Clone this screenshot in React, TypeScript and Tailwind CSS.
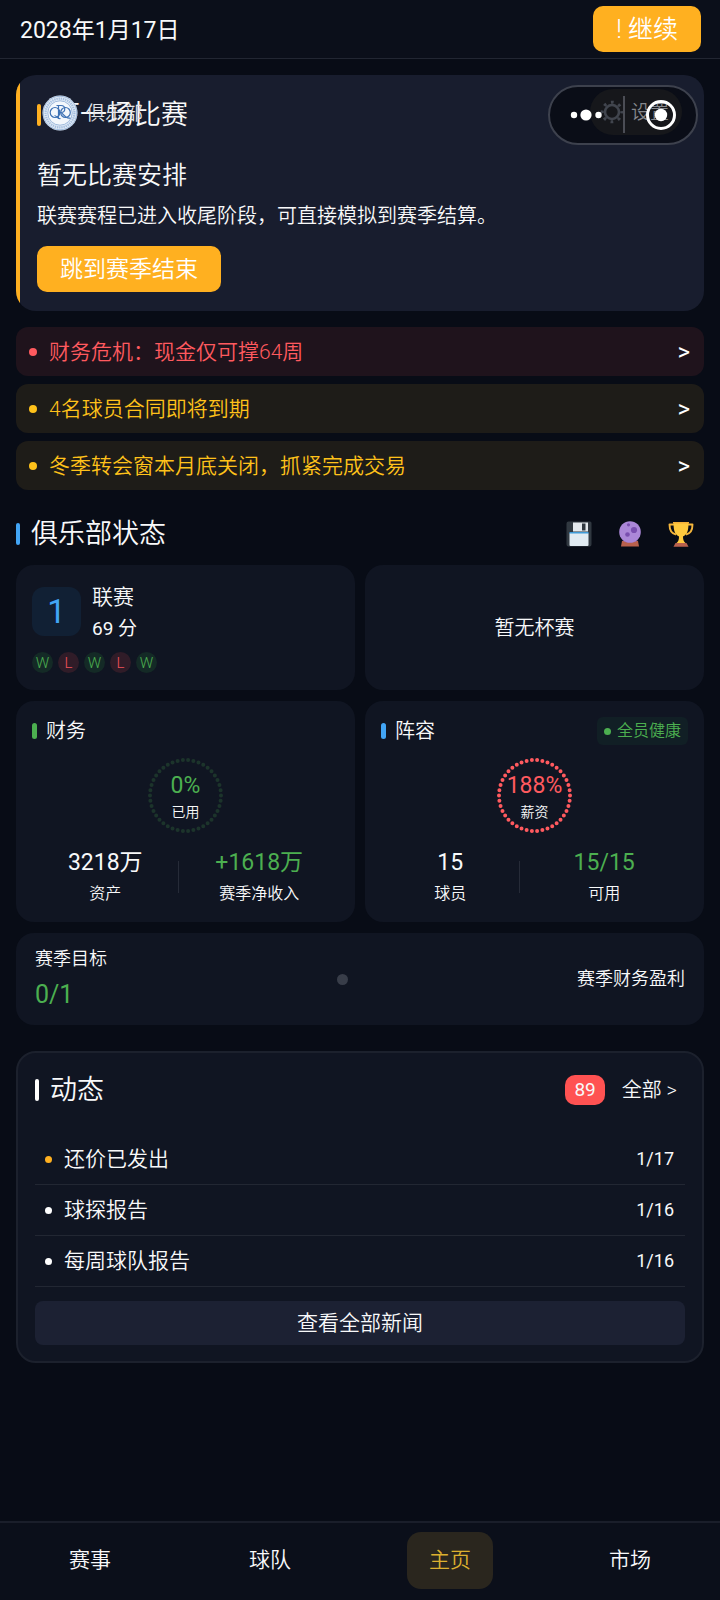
import type { ReactNode } from "react";
import clsx from "clsx";

const alerts = [
  { text: "财务危机：现金仅可撑64周", tone: "danger" },
  { text: "4名球员合同即将到期", tone: "warning" },
  { text: "冬季转会窗本月底关闭，抓紧完成交易", tone: "warning" },
];

const news = [
  { title: "还价已发出", date: "1/17", unread: true },
  { title: "球探报告", date: "1/16", unread: false },
  { title: "每周球队报告", date: "1/16", unread: false },
];

const form = ["W", "L", "W", "L", "W"];

const tabs = ["赛事", "球队", "主页", "市场"];

const cardClass = "rounded-[18px] bg-[#101522]";

function ClubCrest() {
  return (
    <svg viewBox="0 0 36 36" className="size-9" aria-hidden="true">
      <circle cx="18" cy="18" r="17.5" fill="#dfe9f5" />
      <circle cx="18" cy="18" r="16.8" fill="none" stroke="#8fadd4" strokeWidth="0.8" />
      <circle cx="18" cy="18" r="14.4" fill="none" stroke="#a3bddf" strokeWidth="2.2" strokeDasharray="1.3 0.9" />
      <circle cx="18" cy="18" r="12.2" fill="#f3f7fc" stroke="#8aabd4" strokeWidth="0.8" />
      <g fill="none" stroke="#3f72b5" strokeWidth="1.2">
        <ellipse cx="13" cy="17.500" rx="4.800" ry="5" />
        <ellipse cx="23.500" cy="17.500" rx="4.800" ry="5" />
        <path d="M14.500 10.500h4.500c5 0 5 7 0 7h-2.500M16.500 10.500v13.500M19 17.500c2.500 1 4 7 9.500 5.500M12.500 20.500c2 0 3 4 6 3" />
      </g>
    </svg>
  );
}

function GearIcon() {
  return (
    <svg viewBox="0 0 24 24" className="size-6" fill="none" stroke="#41454e" aria-hidden="true">
      <circle cx="12" cy="12" r="7" strokeWidth="2.6" />
      <circle cx="12" cy="12" r="9.800" strokeWidth="3" strokeDasharray="2.800 4.897" strokeDashoffset="1.400" />
    </svg>
  );
}

function FloppyIcon() {
  return (
    <svg viewBox="0 0 26 26" className="size-[26px]" aria-hidden="true">
      <path d="M2.5.5H24a1.500 1.500 0 0 1 1.500 1.500v21.500a2 2 0 0 1-2 2h-21a2 2 0 0 1-2-2v-21a2 2 0 0 1 2-2z" fill="#303840" />
      <path d="M7 1.500h15v9H7z" fill="#e4e9ed" />
      <path d="M16 2.500h3.500v7H16z" fill="#303840" />
      <path d="M3.500 11h19v2h-19z" fill="#3f9bd8" />
      <path d="M3.500 12.500h19V24a1 1 0 0 1-1 1h-17a1 1 0 0 1-1-1z" fill="#e1ebf2" />
    </svg>
  );
}

function CrystalBallIcon() {
  return (
    <svg viewBox="0 0 26 26" className="size-[26px]" aria-hidden="true">
      <path d="M5 20h16l1 5.500H4z" fill="#b9614d" />
      <circle cx="13" cy="11" r="10.800" fill="#ab87d8" />
      <path d="M5 18.500c4.500 4.500 11.500 4.500 16 0-2 4-13 5-16 0z" fill="#8d65bd" />
      <circle cx="17" cy="9" r="3.100" fill="#7a4fb0" />
      <circle cx="10.500" cy="13.500" r="2.300" fill="#7a4fb0" />
      <circle cx="11.500" cy="3.800" r="1.600" fill="#7a4fb0" />
    </svg>
  );
}

function TrophyIcon() {
  return (
    <svg viewBox="0 0 26 26" className="size-[26px]" aria-hidden="true">
      <path d="M6.500 3.500H1.500c0 5 1.500 9 6.500 10M19.500 3.500h5c0 5-1.500 9-6.500 10" fill="none" stroke="#f5b63c" strokeWidth="1.900" strokeLinejoin="round" />
      <path d="M5.500 1h15c0 7-.5 12-5.500 14.500 0 3 .5 5 2.500 6.500h-9c2-1.500 2.500-3.500 2.500-6.500C6 13 5.500 8 5.500 1z" fill="#ffca3e" />
      <path d="M5 1h16v1.500H5z" fill="#f3b13a" />
      <path d="M7.500 22h11l2 3.700h-15z" fill="#b9614d" />
    </svg>
  );
}

function CapsuleMenu() {
  return (
    <svg viewBox="0 0 150 60" className="h-[60px] w-[150px]" fill="#ffffff" aria-hidden="true">
      <circle cx="26" cy="30" r="3.200" />
      <circle cx="38" cy="30" r="5.600" />
      <circle cx="50.500" cy="30" r="3.200" />
      <path d="M75 11h2v37h-2z" fill="#4b4d55" />
      <circle cx="113" cy="30" r="13.500" fill="none" stroke="#ffffff" strokeWidth="3" />
      <circle cx="113" cy="30" r="6.200" />
    </svg>
  );
}

function Ring({ value, label, color, dim }: { value: string; label: string; color: string; dim?: boolean }) {
  return (
    <div className="relative mx-auto mt-3 flex size-[78px] flex-col items-center justify-center pt-1">
      <svg viewBox="0 0 78 78" className={clsx("absolute inset-0", dim && "opacity-20")} aria-hidden="true">
        <circle cx="38.500" cy="38.500" r="35.500" fill="none" stroke={color} strokeWidth="4" strokeLinecap="round" pathLength="210" strokeDasharray="0 5" />
      </svg>
      <span className="relative text-[23px] leading-7 font-normal" style={{ color }}>{value}</span>
      <span className="relative text-sm leading-6">{label}</span>
    </div>
  );
}

function Stat({ value, label, green }: { value: string; label: string; green?: boolean }) {
  return (
    <div className="flex flex-col items-center gap-1">
      <span className={clsx("text-[23px] leading-[30px] font-normal", green && "text-[#4caf50]")}>{value}</span>
      <span className="text-base leading-6">{label}</span>
    </div>
  );
}

function PanelTitle({ children, barClass }: { children: ReactNode; barClass: string }) {
  return (
    <h3 className="flex items-center gap-[9px] text-[20px] leading-7">
      <span className={clsx("h-4 w-[5px] rounded-sm", barClass)} />
      {children}
    </h3>
  );
}

export default function App() {
  return (
    <div className="flex min-h-screen flex-col bg-[#080c16] font-[Roboto,'Noto_Sans_CJK_SC',sans-serif] font-[350] text-[#f8f9fa]">
      <header className="flex h-[59px] items-center justify-between border-b border-[#222632] bg-[#0b0f1a] pr-[19px] pl-5">
        <time className="pt-1 text-[23px] leading-8 font-normal">2028年1月17日</time>
        <button type="button" className="h-[46px] rounded-[10px] bg-[#ffb020] px-[23px] pt-0.5 text-[25px] leading-8 text-white">! 继续</button>
      </header>

      <main className="flex flex-col px-4 pt-4">
        <section className="relative flex overflow-hidden rounded-[20px] bg-[#181d2e]">
          <div className="w-1 bg-[#ffb020]" />
          <div className="flex flex-col items-start pt-5 pb-[19px] pl-[17px]">
            <h2 className="flex items-center gap-3 text-[27px] leading-10">
              <span className="h-[22px] w-1 rounded-sm bg-[#ffb020]" />
              下一场比赛
            </h2>
            <p className="mt-[21px] text-[25px] leading-10">暂无比赛安排</p>
            <p className="mt-0.5 text-[20px] leading-9">联赛赛程已进入收尾阶段，可直接模拟到赛季结算。</p>
            <button type="button" className="mt-3 h-[46px] rounded-[10px] bg-[#ffb020] px-[23px] pt-0.5 text-[23px] leading-8 text-white">跳到赛季结束</button>
          </div>

          <button type="button" className="absolute top-[19px] left-[26px] flex items-center gap-2 text-[19px] leading-9 text-[#e3e5e9]">
            <ClubCrest />
            <span className="pt-0.5">俱乐部</span>
          </button>
          <div className="absolute top-2.5 right-1.5 flex h-[60px] w-[150px] items-center rounded-full border-2 border-[#3d414d] bg-[#0a0d17]">
            <button type="button" className="absolute top-0.5 left-10 flex h-[46px] w-[92px] items-center gap-[7px] rounded-full bg-[#16171b] pl-2.5 text-[19px] text-[#85878c]">
              <GearIcon />
              <span className="pt-0.5 whitespace-nowrap">设置</span>
            </button>
            <button type="button" aria-label="更多" className="absolute -top-0.5 -left-0.5">
              <CapsuleMenu />
            </button>
          </div>
        </section>

        <ul className="mt-4 flex flex-col gap-2">
          {alerts.map((alert) => (
            <li key={alert.text}>
              <button
                type="button"
                className={clsx(
                  "flex h-[49px] w-full items-center rounded-xl pr-[14px] pl-[13px] text-[21px] leading-8",
                  alert.tone === "danger" ? "bg-[#1f131c] text-[#ff5a5f]" : "bg-[#1e1c18] text-[#ffc21a]"
                )}
              >
                <span className="mr-3 size-2 rounded-full bg-current" />
                {alert.text}
                <span className="ml-auto text-2xl leading-8 font-normal text-white">&gt;</span>
              </button>
            </li>
          ))}
        </ul>

        <div className="mt-6 flex items-center justify-between pr-2.5">
          <h2 className="flex items-center gap-[11px] text-[27px] leading-10">
            <span className="h-[22px] w-1 rounded-sm bg-[#42a5f5]" />
            俱乐部状态
          </h2>
          <div className="flex gap-[25px]">
            <button type="button" aria-label="存档"><FloppyIcon /></button>
            <button type="button" aria-label="预测"><CrystalBallIcon /></button>
            <button type="button" aria-label="荣誉"><TrophyIcon /></button>
          </div>
        </div>

        <div className="mt-[11px] grid grid-cols-2 gap-x-2.5 gap-y-[11px]">
          <section className={clsx(cardClass, "p-4")}>
            <div className="flex items-start gap-[11px]">
              <span className="mt-1.5 flex size-[49px] items-center justify-center rounded-xl bg-[#112034] text-[33px] leading-10 font-normal text-[#42a5f5]">1</span>
              <div>
                <h3 className="text-[21px] leading-8">联赛</h3>
                <p className="text-[19px] leading-8 font-normal">69 分</p>
              </div>
            </div>
            <div className="mt-[7px] flex gap-[5px] pb-px">
              {form.map((result, i) => (
                <span
                  key={i}
                  className={clsx(
                    "flex size-[21px] items-center justify-center rounded-full text-[15px] leading-5",
                    result === "W" ? "bg-[#142a26] text-[#4caf50]" : "bg-[#301c28] text-[#f0525a]"
                  )}
                >
                  {result}
                </span>
              ))}
            </div>
          </section>

          <section className={clsx(cardClass, "flex items-center justify-center text-[20px] leading-8")}>暂无杯赛</section>

          <section className={clsx(cardClass, "p-4")}>
            <PanelTitle barClass="bg-[#4caf50]">财务</PanelTitle>
            <Ring value="0%" label="已用" color="#4caf50" dim />
            <div className="mt-[13px] flex items-center justify-evenly">
              <Stat value="3218万" label="资产" />
              <span className="h-8 w-px bg-[#262b38]" />
              <Stat value="+1618万" label="赛季净收入" green />
            </div>
          </section>

          <section className={clsx(cardClass, "p-4")}>
            <div className="flex items-center justify-between">
              <PanelTitle barClass="bg-[#42a5f5]">阵容</PanelTitle>
              <span className="flex items-center gap-1.5 rounded-md bg-[#111f25] px-[7px] text-base leading-7 text-[#4caf50]">
                <span className="size-[7px] rounded-full bg-current" />
                全员健康
              </span>
            </div>
            <Ring value="188%" label="薪资" color="#ff5a5f" />
            <div className="mt-[13px] flex items-center justify-evenly">
              <Stat value="15" label="球员" />
              <span className="h-8 w-px bg-[#262b38]" />
              <Stat value="15/15" label="可用" green />
            </div>
          </section>

          <section className={clsx(cardClass, "col-span-2 flex items-center justify-between px-[19px] py-2.5")}>
            <div>
              <h3 className="text-[18px] leading-8">赛季目标</h3>
              <p className="text-[25px] leading-10 font-normal text-[#4caf50]">0/1</p>
            </div>
            <span className="size-[11px] rounded-full bg-[#383d49]" />
            <p className="text-[18px] leading-8">赛季财务盈利</p>
          </section>
        </div>

        <section className="mt-[26px] rounded-[20px] border-2 border-[#1c212d] bg-[#101522] px-[17px] pt-[17px] pb-4">
          <div className="flex items-center pr-2">
            <h2 className="flex items-center gap-[11px] text-[27px] leading-10">
              <span className="h-[22px] w-1 rounded-sm bg-white" />
              动态
            </h2>
            <span className="ml-auto rounded-[10px] bg-[#ff5252] px-[9px] text-[19px] leading-[30px] font-normal">89</span>
            <a href="#news" className="ml-[17px] text-[20px] leading-8">全部 &gt;</a>
          </div>
          <ul className="mt-6">
            {news.map((item) => (
              <li key={item.title} className="flex h-[51px] items-center border-b border-[#222733] pr-[11px] pl-[10px]">
                <span className={clsx("mr-3 size-[7px] rounded-full", item.unread ? "bg-[#ffb020]" : "bg-white")} />
                <a href="#news" className="text-[21px] leading-8">{item.title}</a>
                <time className="ml-auto text-[18px] leading-8 font-normal">{item.date}</time>
              </li>
            ))}
          </ul>
          <button type="button" className="mt-[14px] h-11 w-full rounded-lg bg-[#1c2133] text-[21px] leading-8">查看全部新闻</button>
        </section>
      </main>

      <nav className="mt-auto grid h-[79px] grid-cols-4 items-center justify-items-center border-t-2 border-[#1a1e2a] bg-[#0b0f1a] pb-0.5">
        {tabs.map((tab) => (
          <a
            key={tab}
            href="#"
            className={clsx(
              "rounded-[14px] px-[22px] pt-3 pb-[13px] text-[21px] leading-8",
              tab === "主页" && "bg-[#2a261e] text-[#dcb02f]"
            )}
          >
            {tab}
          </a>
        ))}
      </nav>
    </div>
  );
}
